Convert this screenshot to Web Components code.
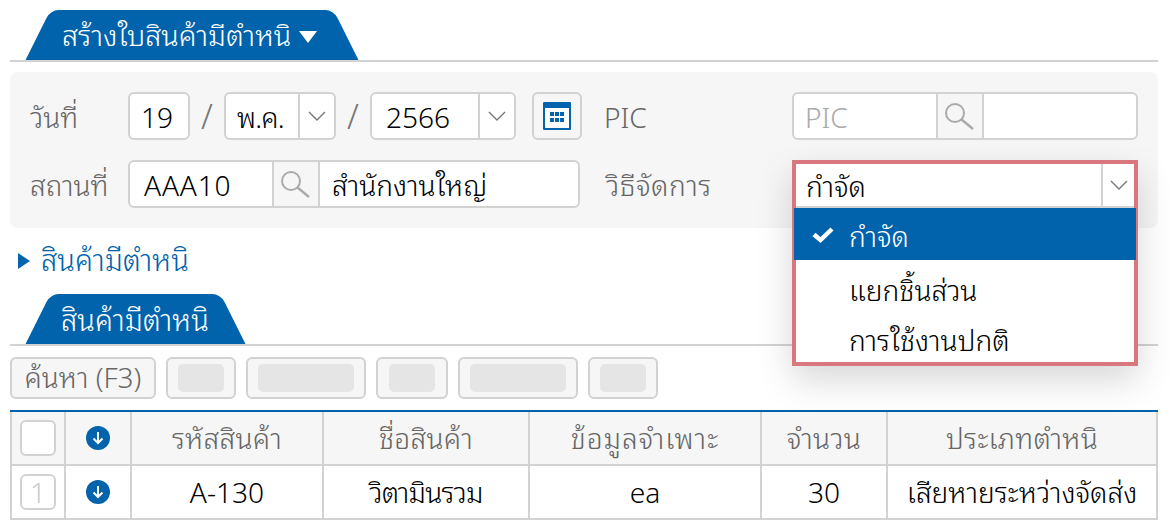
<!DOCTYPE html>
<html lang="th">
<head>
<meta charset="utf-8">
<title>สร้างใบสินค้ามีตำหนิ</title>
<style>
  html, body { margin: 0; background: #fff; }
  body {
    width: 1170px;
    height: 530px;
    overflow: hidden;
    box-sizing: border-box;
    padding: 10px 12px 0 10px;
    font: 300 28.1px/1.2 "Noto Sans", "Noto Sans Thai Looped", sans-serif;
    color: #000;
  }
</style>
</head>
<body>
<defect-page></defect-page>

<script>
const ICONS = {
  chevron: `<svg width="18" height="10" viewBox="0 0 18 10" fill="none" stroke="#777" stroke-width="1.4"><path d="M1 1l8 8 8-8"/></svg>`,
  search: `<svg width="30" height="27" viewBox="0 0 30 27" fill="none" stroke="#aaa" stroke-width="2"><circle cx="10" cy="10" r="9"/><path d="M16.5 16.5L28 26" stroke-width="2.4"/></svg>`,
  calendar: `<svg width="28" height="28" viewBox="0 0 28 28"><rect width="28" height="28" rx="1" fill="#0063ab"/><rect x="2" y="6" width="24" height="20" fill="#fff"/><g fill="#0063ab"><rect x="7" y="10" width="4" height="4"/><rect x="12" y="10" width="4" height="4"/><rect x="17" y="10" width="4" height="4"/><rect x="7" y="16" width="4" height="4"/><rect x="12" y="16" width="4" height="4"/><rect x="17" y="16" width="4" height="4"/></g></svg>`,
  check: `<svg width="22" height="16" viewBox="0 0 22 16" fill="none" stroke="#fff" stroke-width="4.4"><path d="M2 7.5l6.5 5.5L20 2"/></svg>`,
  down: `<svg width="24" height="24" viewBox="0 0 24 24"><circle cx="12" cy="12" r="12" fill="#0063ab"/><path d="M12 6v11M7.5 12.5L12 17l4.5-4.5" fill="none" stroke="#fff" stroke-width="2"/></svg>`
};

class BlueTab extends HTMLElement {
  constructor() {
    super();
    this.attachShadow({ mode: "open" });
    const caret = this.hasAttribute("caret");
    this.shadowRoot.innerHTML = `
      <style>
        :host { display: block; border-bottom: 2px solid #d2d2d2; padding-left: 15px; }
        .tab {
          position: relative;
          z-index: 0;
          display: inline-flex;
          box-sizing: border-box;
          align-items: center;
          gap: 8px;
          width: ${caret ? "333px" : "220px"};
          height: 50px;
          padding-left: ${caret ? "37px" : "36px"};
          padding-top: ${caret ? "0" : "4px"};
          color: #fff;
          font-size: ${caret ? "28.8px" : "29.2px"};
          font-weight: 350;
          white-space: nowrap;
        }
        .tab::before, .tab::after {
          content: "";
          position: absolute;
          z-index: -1;
          top: 0;
          bottom: 0;
          width: 60%;
          background: #0063ab;
        }
        .tab::before { left: 12.5px; transform: skewX(-26.5deg); border-top-left-radius: 8px; }
        .tab::after { right: 12.5px; transform: skewX(26.5deg); border-top-right-radius: 8px; }
        .caret {
          width: 0; height: 0; margin-top: 3px;
          border: 9px solid transparent; border-bottom: 0;
          border-top: 12px solid #fff;
        }
      </style>
      <div class="tab"><slot></slot>${caret ? `<span class="caret"></span>` : ""}</div>`;
  }
}
customElements.define("blue-tab", BlueTab);

class InputBox extends HTMLElement {
  constructor() {
    super();
    this.attachShadow({ mode: "open" });
    this.shadowRoot.innerHTML = `
      <style>
        :host {
          display: flex;
          box-sizing: border-box;
          height: 48px;
          background: #fff;
          border: 2px solid #d2d2d2;
          border-radius: 6px;
          overflow: hidden;
          color: #000;
        }
        ::slotted(*) { display: flex; align-items: center; height: 100%; box-sizing: border-box; white-space: nowrap; }
      </style>
      <slot></slot>`;
  }
}
customElements.define("input-box", InputBox);

class BoxCell extends HTMLElement {
  constructor() {
    super();
    this.attachShadow({ mode: "open" });
    const kind = this.getAttribute("kind");
    const icon = kind === "search" ? ICONS.search : kind === "chevron" ? ICONS.chevron : "";
    this.shadowRoot.innerHTML = `
      <style>
        :host {
          flex: ${this.getAttribute("w") ? "none" : "1"};
          width: ${this.getAttribute("w") || "auto"};
          padding-left: ${this.getAttribute("pad") || "0"};
          padding-top: ${icon ? "0" : "3px"};
          justify-content: ${icon ? "center" : "flex-start"};
          ${icon ? "border-left: 2px solid #d2d2d2;" : ""}
          ${kind === "search" ? "background: #f6f6f6; border-right: 2px solid #d2d2d2;" : ""}
        }
      </style>
      ${icon}<slot></slot>`;
  }
}
customElements.define("box-cell", BoxCell);

class OptionMenu extends HTMLElement {
  constructor() {
    super();
    this.attachShadow({ mode: "open" });
    this.shadowRoot.innerHTML = `
      <style>
        :host { display: block; position: relative; height: 48px; color: #000; }
        .pop {
          position: absolute;
          z-index: 5;
          left: 0; top: 0;
          width: 346px;
          height: 206px;
          box-sizing: border-box;
          background: #fff;
          border: 4px solid #d9777f;
          box-shadow: 0 14px 34px rgba(0,0,0,.16);
        }
        .sel { display: flex; height: 44px; align-items: center; border-bottom: 2px solid #d2d2d2; box-sizing: border-box; }
        .sel span { flex: 1; padding: 3px 0 0 10px; }
        .sel i { width: 33px; height: 100%; display: flex; align-items: center; justify-content: center; border-left: 2px solid #d2d2d2; box-sizing: border-box; }
        .opt { display: flex; align-items: center; box-sizing: border-box; padding: 6px 0 0 53px; position: relative; }
        .opt.on { height: 52px; background: #0063ab; color: #fff; margin: 0 -2px; padding-left: 55px; }
        .opt svg { position: absolute; left: 18px; top: 19px; }
        .opt.on + .opt { height: 52px; margin-top: 2px; }
        .opt + .opt + .opt { height: 48px; margin-top: 0; }
      </style>
      <div class="pop">
        <div class="sel"><span>กำจัด</span><i>${ICONS.chevron}</i></div>
        <div class="opt on">${ICONS.check}กำจัด</div>
        <div class="opt">แยกชิ้นส่วน</div>
        <div class="opt">การใช้งานปกติ</div>
      </div>`;
  }
}
customElements.define("option-menu", OptionMenu);

class HeadForm extends HTMLElement {
  constructor() {
    super();
    this.attachShadow({ mode: "open" });
    this.shadowRoot.innerHTML = `
      <style>
        :host {
          display: grid;
          grid-template-columns: 98px 476px 188px 346px;
          row-gap: 20px;
          align-items: center;
          margin-top: 10px;
          padding: 20px 0 20px 20px;
          background: #f6f6f6;
          border-radius: 8px;
          color: #666;
        }
        .lbl { padding-top: 4px; }
        .date { display: flex; align-items: center; }
        .slash { width: 34px; text-align: center; font-size: 34px; font-weight: 300; line-height: 1; color: #777; }
        .cal {
          width: 50px; height: 48px; margin-left: 16px; box-sizing: border-box;
          display: flex; align-items: center; justify-content: center;
          border: 2px solid #d2d2d2; border-radius: 6px;
        }
      </style>
      <span class="lbl">วันที่</span>
      <div class="date">
        <input-box style="width:62px"><box-cell pad="11px">19</box-cell></input-box>
        <span class="slash">/</span>
        <input-box style="width:112px"><box-cell pad="11px" style="letter-spacing:-.8px">พ.ค.</box-cell><box-cell kind="chevron" w="36px"></box-cell></input-box>
        <span class="slash">/</span>
        <input-box style="width:146px"><box-cell pad="14px">2566</box-cell><box-cell kind="chevron" w="36px"></box-cell></input-box>
        <div class="cal">${ICONS.calendar}</div>
      </div>
      <span class="lbl" style="font-weight:350">PIC</span>
      <input-box><box-cell pad="11px" w="142px" style="color:#aaa">PIC</box-cell><box-cell kind="search" w="48px"></box-cell><box-cell></box-cell></input-box>
      <span class="lbl">สถานที่</span>
      <input-box style="width:452px"><box-cell pad="14px" w="142px" style="letter-spacing:.8px">AAA10</box-cell><box-cell kind="search" w="48px"></box-cell><box-cell pad="12px">สำนักงานใหญ่</box-cell></input-box>
      <span class="lbl" style="padding-left:2px;letter-spacing:.6px">วิธีจัดการ</span>
      <option-menu></option-menu>`;
  }
}
customElements.define("head-form", HeadForm);

class GhostButton extends HTMLElement {
  constructor() {
    super();
    this.attachShadow({ mode: "open" });
    const w = this.getAttribute("blank");
    this.shadowRoot.innerHTML = `
      <style>
        :host {
          display: flex; align-items: center; justify-content: center;
          box-sizing: border-box; height: 42px; width: ${this.getAttribute("w")}px;
          background: #f6f6f6; border: 2px solid #d2d2d2; border-radius: 6px;
          color: #666; white-space: nowrap; font-size: 28px; font-weight: 350;
        }
        b { display: block; height: 28px; border-radius: 5px; background: #e5e5e5; }
      </style>
      ${w ? `<b style="width:${w}px"></b>` : `<slot></slot>`}`;
  }
}
customElements.define("ghost-button", GhostButton);

class DefectGrid extends HTMLElement {
  constructor() {
    super();
    this.attachShadow({ mode: "open" });
    this.shadowRoot.innerHTML = `
      <style>
        :host { display: block; margin-top: 11px; border-top: 2px solid #0063ab; }
        table { border-collapse: collapse; table-layout: fixed; width: 1148px; }
        th, td { border: 2px solid #d2d2d2; border-top: 0; padding: 0; text-align: center; height: 52px; white-space: nowrap; line-height: 1; }
        th { background: #f6f6f6; color: #666; font-weight: 300; letter-spacing: .3px; }
        td svg, th svg { display: block; margin: auto; }
        .box {
          width: 36px; height: 36px; margin: auto; box-sizing: border-box;
          background: #fff; border: 2px solid #d2d2d2; border-radius: 6px;
          display: flex; align-items: center; justify-content: center; color: #ccc;
        }
      </style>
      <table>
        <colgroup><col style="width:54px"><col style="width:66px"><col style="width:192px"><col style="width:206px"><col style="width:232px"><col style="width:126px"><col></colgroup>
        <tr><th><div class="box"></div></th><th>${ICONS.down}</th><th>รหัสสินค้า</th><th>ชื่อสินค้า</th><th style="letter-spacing:.9px">ข้อมูลจำเพาะ</th><th>จำนวน</th><th>ประเภทตำหนิ</th></tr>
        <tr><td><div class="box">1</div></td><td>${ICONS.down}</td><td>A-130</td><td style="letter-spacing:-.8px">วิตามินรวม</td><td>ea</td><td>30</td><td>เสียหายระหว่างจัดส่ง</td></tr>
      </table>`;
  }
}
customElements.define("defect-grid", DefectGrid);

class DefectPage extends HTMLElement {
  constructor() {
    super();
    this.attachShadow({ mode: "open" });
    this.shadowRoot.innerHTML = `
      <style>
        :host { display: block; }
        .more { display: flex; align-items: center; gap: 11px; margin: 15px 0 0 8px; height: 36px; color: #0063ab; font-size: 29.2px; font-weight: 350; }
        .more i { width: 0; height: 0; border: 8px solid transparent; border-right: 0; border-left: 12px solid #0063ab; }
        .tab2 { margin-top: 15px; }
        .bar { display: flex; gap: 10px; margin-top: 11px; }
      </style>
      <blue-tab caret>สร้างใบสินค้ามีตำหนิ</blue-tab>
      <head-form></head-form>
      <div class="more"><i></i>สินค้ามีตำหนิ</div>
      <blue-tab class="tab2">สินค้ามีตำหนิ</blue-tab>
      <div class="bar">
        <ghost-button w="146">ค้นหา (F3)</ghost-button>
        <ghost-button w="70" blank="46"></ghost-button>
        <ghost-button w="120" blank="96"></ghost-button>
        <ghost-button w="72" blank="46"></ghost-button>
        <ghost-button w="120" blank="96"></ghost-button>
        <ghost-button w="70" blank="46"></ghost-button>
      </div>
      <defect-grid></defect-grid>`;
  }
}
customElements.define("defect-page", DefectPage);
</script>
</body>
</html>
